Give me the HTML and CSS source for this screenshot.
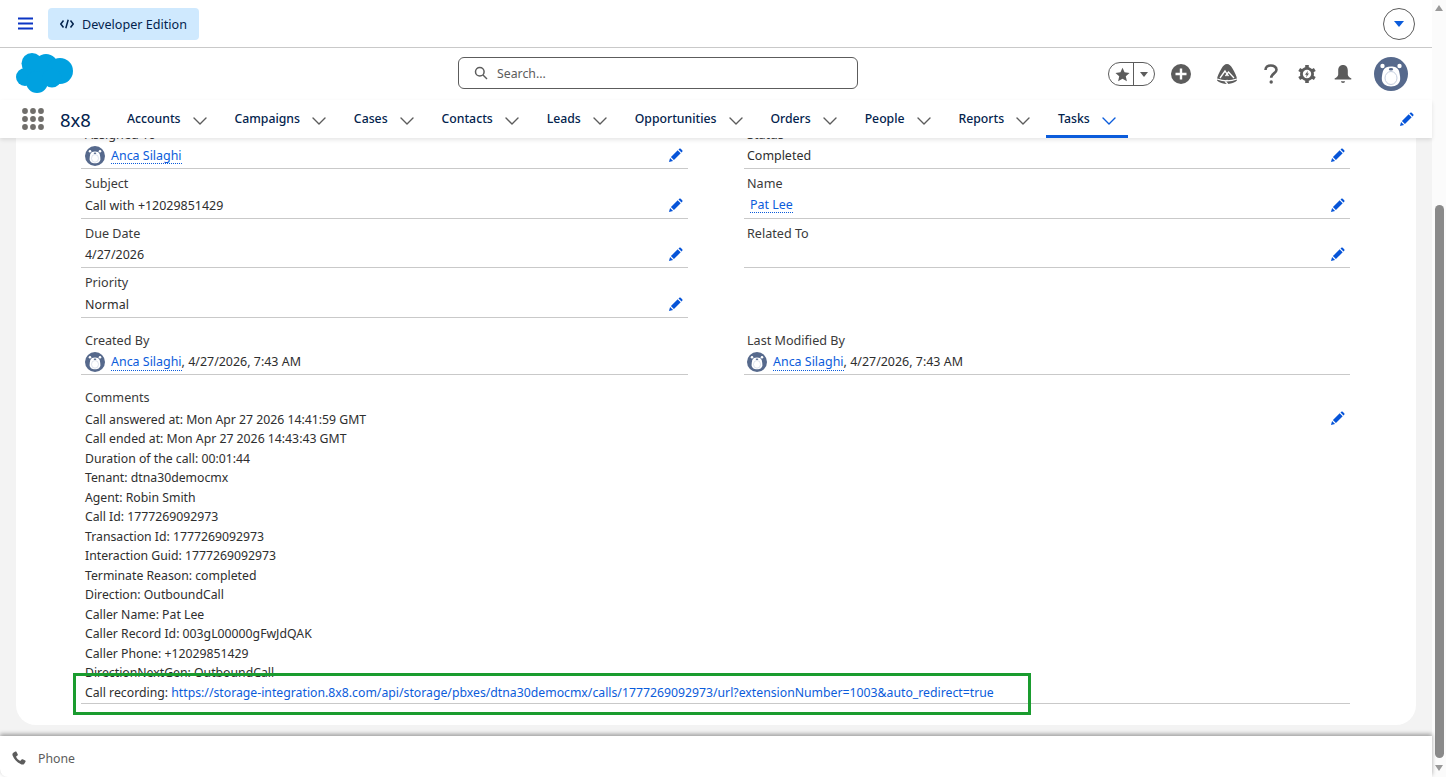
FILE: index.html
```html
<!DOCTYPE html>
<html lang="en">
<head>
    <meta charset="UTF-8">
    <title>Task | Salesforce</title>
    <link rel="stylesheet" href="styles.css">
</head>
<body>
    <svg class="defs" width="0" height="0">
        <symbol id="pencil" viewBox="0 0 16 16">
            <path d="M1 15l1.200-4.400 3.200 3.200z"/>
            <path d="M3.100 9.700l7.200-7.200 3.200 3.200-7.200 7.200z"/>
            <path d="M11.200 1.600l.9-.8c.4-.4 1-.4 1.400 0l1.700 1.700c.4.4.4 1 0 1.400l-.8.9z"/>
        </symbol>
        <symbol id="bear" viewBox="0 0 34 34">
            <circle cx="17" cy="17" r="17" fill="#56698c"/>
            <circle cx="8.500" cy="9" r="2.200" fill="#fff"/>
            <circle cx="25.500" cy="9" r="2.200" fill="#fff"/>
            <path d="M17 9.500c4 0 7 1.300 8 4.500.8 3 1.200 5.500 1.200 8 0 4.500-4 7.500-9.200 7.500S7.800 26.500 7.800 22c0-2.500.4-5 1.200-8 1-3.200 4-4.500 8-4.500z" fill="#fff"/>
            <ellipse cx="17" cy="21" rx="6" ry="6.500" fill="none" stroke="#c5cede" stroke-width="1"/>
            <ellipse cx="17" cy="12.300" rx="2.200" ry="1.200" fill="#56698c"/>
        </symbol>
        <symbol id="chevron" viewBox="0 0 14 8">
            <path d="M1 1l6 6 6-6" fill="none" stroke="currentColor" stroke-width="1.400" stroke-linecap="round" stroke-linejoin="round"/>
        </symbol>
    </svg>

    <div class="app">
        <div class="topbar">
            <svg class="hamburger" viewBox="0 0 15 13"><path d="M0 1.500h15M0 6.500h15M0 11.500h15"/></svg>
            <div class="edition">
                <svg class="code-icon" viewBox="0 0 14 10"><path d="M3.500 1.500L.8 5l2.700 3.500M10.500 1.500L13.200 5l-2.700 3.500M8.200 .8L5.800 9.200"/></svg>
                <span>Developer Edition</span>
            </div>
            <button class="setup-menu"><span class="caret"></span></button>
        </div>

        <header class="header">
            <svg class="cloud" viewBox="0 0 57 40">
                <circle cx="16" cy="10.500" r="10.500"/>
                <circle cx="30" cy="13" r="12"/>
                <circle cx="44" cy="18" r="13"/>
                <circle cx="9" cy="24" r="9"/>
                <circle cx="21" cy="29" r="11"/>
                <circle cx="36" cy="25" r="9.500"/>
            </svg>
            <div class="search">
                <svg class="search-icon" viewBox="0 0 14 14"><circle cx="5.800" cy="5.800" r="4.300"/><path d="M9 9l4 4"/></svg>
                <span>Search...</span>
            </div>
            <div class="utility">
                <div class="favorites">
                    <span class="fav-star">
                        <svg viewBox="0 0 16 16"><path d="M8 .8l2.200 4.900 5.300.6-4 3.500 1.200 5.300L8 12.400l-4.700 2.700 1.200-5.300-4-3.500 5.300-.6z"/></svg>
                    </span>
                    <span class="fav-menu"><span class="caret grey"></span></span>
                </div>
                <svg class="u-plus" viewBox="0 0 20 20"><circle cx="10" cy="10" r="10"/><path d="M10 4.500v11M4.500 10h11" stroke="#fff" stroke-width="2.400" fill="none"/></svg>
                <svg class="u-trail" viewBox="0 0 22 20">
                    <path d="M11 0c2.200 0 3.800 1.500 5.500 4.500 2 3.500 4.500 8 4.500 11 0 1-.4 1.500-1.200 2C17.500 18.800 14.500 20 11 20s-6.500-1.200-8.800-2.500c-.8-.5-1.200-1-1.200-2 0-3 2.500-7.500 4.500-11C7.200 1.500 8.800 0 11 0z"/>
                    <path d="M4 14l5-7 2 3 1.500-2 5.500 6M1 15c6 2.200 14 2.200 20 0M11.500 16l-2 1.800 2.200 2.200M9.500 12l1.500-2 1.500 2" fill="none" stroke="#fff" stroke-width="1.300"/>
                </svg>
                <svg class="u-help" viewBox="0 0 16 20"><path d="M2.500 6c0-3 2.300-4.500 5.300-4.500S13.500 3 13.500 5.700c0 3.600-5.300 3.800-5.300 8" fill="none" stroke="#5c5c5c" stroke-width="2.600"/><circle cx="8.200" cy="18" r="1.700"/></svg>
                <svg class="u-gear" viewBox="0 0 20 20">
                    <g class="gear-teeth">
                        <path d="M10 1v18"/>
                        <path d="M2.200 5.500l15.600 9"/>
                        <path d="M2.200 14.500l15.600-9"/>
                    </g>
                    <circle cx="10" cy="10" r="7"/>
                    <circle cx="10" cy="10" r="4.200" fill="#fff"/>
                    <path d="M11 6.800L8 10.800h1.700l-.7 2.600 3-4h-1.700z"/>
                </svg>
                <svg class="u-bell" viewBox="0 0 20 20"><path d="M10 1c3 0 4.800 2.200 4.800 5.500v4c0 1.500 1.200 2.800 3.200 3.700.7.400.5 1.300-.4 1.300H2.400c-.9 0-1.100-.9-.4-1.300 2-.9 3.200-2.200 3.200-3.700v-4C5.200 3.200 7 1 10 1z"/><path d="M8 17.300h4c0 .9-.8 1.700-2 1.700s-2-.8-2-1.700z"/></svg>
                <svg class="u-avatar"><use href="#bear"/></svg>
            </div>
        </header>

        <nav class="nav">
            <svg class="waffle" viewBox="0 0 22 22">
                <circle cx="3" cy="3" r="2.900"/><circle cx="11" cy="3" r="2.900"/><circle cx="19" cy="3" r="2.900"/>
                <circle cx="3" cy="11" r="2.900"/><circle cx="11" cy="11" r="2.900"/><circle cx="19" cy="11" r="2.900"/>
                <circle cx="3" cy="19" r="2.900"/><circle cx="11" cy="19" r="2.900"/><circle cx="19" cy="19" r="2.900"/>
            </svg>
            <span class="app-name">8x8</span>
            <a class="tab">Accounts<svg class="tab-chev"><use href="#chevron"/></svg></a>
            <a class="tab">Campaigns<svg class="tab-chev"><use href="#chevron"/></svg></a>
            <a class="tab">Cases<svg class="tab-chev"><use href="#chevron"/></svg></a>
            <a class="tab">Contacts<svg class="tab-chev"><use href="#chevron"/></svg></a>
            <a class="tab">Leads<svg class="tab-chev"><use href="#chevron"/></svg></a>
            <a class="tab">Opportunities<svg class="tab-chev"><use href="#chevron"/></svg></a>
            <a class="tab">Orders<svg class="tab-chev"><use href="#chevron"/></svg></a>
            <a class="tab">People<svg class="tab-chev"><use href="#chevron"/></svg></a>
            <a class="tab">Reports<svg class="tab-chev"><use href="#chevron"/></svg></a>
            <a class="tab active">Tasks<svg class="tab-chev"><use href="#chevron"/></svg></a>
            <svg class="pencil nav-pencil"><use href="#pencil"/></svg>
        </nav>

        <main class="main">
            <section class="card">
                <div class="grid">
                    <div class="field">
                        <div class="label">Assigned To</div>
                        <div class="value"><span class="who"><svg class="mini-avatar"><use href="#bear"/></svg><a class="link">Anca Silaghi</a></span><svg class="pencil"><use href="#pencil"/></svg></div>
                    </div>
                    <div class="field">
                        <div class="label">Status</div>
                        <div class="value"><span>Completed</span><svg class="pencil"><use href="#pencil"/></svg></div>
                    </div>
                    <div class="field">
                        <div class="label">Subject</div>
                        <div class="value"><span>Call with +12029851429</span><svg class="pencil"><use href="#pencil"/></svg></div>
                    </div>
                    <div class="field">
                        <div class="label">Name</div>
                        <div class="value"><a class="link pad">Pat Lee</a><svg class="pencil"><use href="#pencil"/></svg></div>
                    </div>
                    <div class="field">
                        <div class="label">Due Date</div>
                        <div class="value"><span>4/27/2026</span><svg class="pencil"><use href="#pencil"/></svg></div>
                    </div>
                    <div class="field">
                        <div class="label">Related To</div>
                        <div class="value"><span></span><svg class="pencil"><use href="#pencil"/></svg></div>
                    </div>
                    <div class="field">
                        <div class="label">Priority</div>
                        <div class="value"><span>Normal</span><svg class="pencil"><use href="#pencil"/></svg></div>
                    </div>
                    <div class="field blank"></div>
                    <div class="field spaced">
                        <div class="label">Created By</div>
                        <div class="value"><span class="who"><svg class="mini-avatar"><use href="#bear"/></svg><span><a class="link">Anca Silaghi</a>, 4/27/2026, 7:43 AM</span></span></div>
                    </div>
                    <div class="field spaced">
                        <div class="label">Last Modified By</div>
                        <div class="value"><span class="who"><svg class="mini-avatar"><use href="#bear"/></svg><span><a class="link">Anca Silaghi</a>, 4/27/2026, 7:43 AM</span></span></div>
                    </div>
                </div>

                <div class="comments">
                    <div class="label">Comments</div>
                    <div class="comment-body">
                        <div class="lines">
                            <div>Call answered at: Mon Apr 27 2026 14:41:59 GMT</div>
                            <div>Call ended at: Mon Apr 27 2026 14:43:43 GMT</div>
                            <div>Duration of the call: 00:01:44</div>
                            <div>Tenant: dtna30democmx</div>
                            <div>Agent: Robin Smith</div>
                            <div>Call Id: 1777269092973</div>
                            <div>Transaction Id: 1777269092973</div>
                            <div>Interaction Guid: 1777269092973</div>
                            <div>Terminate Reason: completed</div>
                            <div>Direction: OutboundCall</div>
                            <div>Caller Name: Pat Lee</div>
                            <div>Caller Record Id: 003gL00000gFwJdQAK</div>
                            <div>Caller Phone: +12029851429</div>
                            <div>DirectionNextGen: OutboundCall</div>
                            <div>Call recording: <a class="url">https://storage-integration.8x8.com/api/storage/pbxes/dtna30democmx/calls/1777269092973/url?extensionNumber=1003&amp;auto_redirect=true</a></div>
                        </div>
                        <svg class="pencil comment-pencil"><use href="#pencil"/></svg>
                    </div>
                    <div class="highlight"></div>
                </div>
            </section>
        </main>

        <footer class="dock">
            <svg class="phone" viewBox="0 0 14 14"><path d="M3.300.5L1.300 1.700C.4 2.300.2 3.400.6 4.500c1.700 4.200 4.700 7.200 8.900 8.900 1.100.4 2.200.2 2.800-.7l1.200-2c.2-.4.100-.8-.3-1.100L10.700 8.300c-.4-.2-.8-.2-1.100.2l-.9 1.100c-.2.300-.5.300-.8.200C6.300 9 5 7.700 4.200 6.100c-.1-.3-.1-.6.2-.8l1.100-.9c.4-.3.400-.7.200-1.100L4.400.8C4.100.4 3.700.3 3.300.5z"/></svg>
            <span>Phone</span>
        </footer>
    </div>

    <div class="scrollbar">
        <span class="sb-up"></span>
        <span class="sb-thumb"></span>
        <span class="sb-down"></span>
    </div>
</body>
</html>
```

FILE: styles.css
```css
* {
    box-sizing: border-box;
}
body {
    margin: 0;
    height: 777px;
    overflow: hidden;
    display: flex;
    background: #fff;
    font-family: "Noto Sans", "Open Sans", sans-serif;
    font-size: 12.3px;
    color: #2e2e2e;
}
.defs {
    position: absolute;
}
.app {
    width: 1432px;
    height: 777px;
    display: flex;
    flex-direction: column;
}

/* top bar */
.topbar {
    height: 48px;
    flex: none;
    display: flex;
    align-items: center;
    padding: 0 17px 0 18px;
    border-bottom: 1px solid #c9c9c9;
}
.hamburger {
    width: 15px;
    height: 13px;
    fill: none;
    stroke: #0b35c4;
    stroke-width: 1.900;
}
.edition {
    margin-left: 15px;
    width: 151px;
    height: 32px;
    display: flex;
    align-items: center;
    padding: 1px 0 0 12px;
    gap: 8px;
    background: #cfe9fe;
    border-radius: 4px;
    color: #03234d;
    font-size: 12.600px;
}
.code-icon {
    width: 14px;
    height: 10px;
    fill: none;
    stroke: #03234d;
    stroke-width: 1.500;
}
.setup-menu {
    margin-left: auto;
    width: 32px;
    height: 32px;
    padding: 0;
    background: #fff;
    border: 1px solid #5c5c5c;
    border-radius: 50%;
    display: flex;
    align-items: center;
    justify-content: center;
}
.caret {
    width: 0;
    height: 0;
    border-left: 5px solid transparent;
    border-right: 5px solid transparent;
    border-top: 6px solid #0b5cdb;
}
.caret.grey {
    border-left-width: 4.500px;
    border-right-width: 4.500px;
    border-top: 5px solid #5c5c5c;
}

/* global header */
.header {
    height: 52px;
    flex: none;
    display: flex;
    align-items: center;
    padding: 0 24px 0 16px;
}
.cloud {
    width: 57px;
    height: 40px;
    fill: #00a1e0;
    margin-top: -2px;
}
.search {
    margin-left: 385px;
    margin-top: -3px;
    width: 400px;
    height: 32px;
    display: flex;
    align-items: center;
    gap: 9px;
    padding: 1px 0 0 15px;
    border: 1px solid #5c5c5c;
    border-radius: 6px;
    color: #5c5c5c;
}
.search-icon {
    width: 14px;
    height: 14px;
    fill: none;
    stroke: #5c5c5c;
    stroke-width: 1.500;
}
.utility {
    margin-left: auto;
    display: flex;
    align-items: center;
    fill: #5c5c5c;
}
.favorites {
    width: 47px;
    height: 24px;
    display: flex;
    border: 1px solid #5c5c5c;
    border-radius: 12px;
}
.fav-star {
    width: 25px;
    display: flex;
    align-items: center;
    justify-content: center;
    padding-left: 2px;
    border-right: 1px solid #5c5c5c;
}
.fav-star svg {
    width: 15px;
    height: 15px;
}
.fav-menu {
    flex: 1;
    display: flex;
    align-items: center;
    justify-content: center;
}
.u-plus {
    width: 20px;
    height: 20px;
    margin-left: 16px;
}
.u-trail {
    width: 22px;
    height: 20px;
    margin-left: 25px;
}
.u-help {
    width: 16px;
    height: 20px;
    margin-left: 25px;
}
.u-gear {
    width: 20px;
    height: 20px;
    margin-left: 18px;
}
.gear-teeth {
    fill: none;
    stroke: #5c5c5c;
    stroke-width: 3.600;
}
.u-bell {
    width: 20px;
    height: 20px;
    margin-left: 16px;
}
.u-avatar {
    width: 34px;
    height: 34px;
    margin-left: 21px;
}

/* app nav */
.nav {
    height: 38px;
    flex: none;
    display: flex;
    align-items: stretch;
    padding-left: 22px;
    background: #fff;
    box-shadow: 0 2px 4px rgba(0, 0, 0, 0.1);
    position: relative;
    z-index: 2;
}
.waffle {
    width: 22px;
    height: 22px;
    margin-top: 8px;
    fill: #706e6b;
}
.app-name {
    margin-left: 16px;
    width: 55px;
    font-size: 18.500px;
    line-height: 40px;
    color: #03234d;
}
.tab {
    display: flex;
    align-items: center;
    padding: 1px 12px 0;
    margin-right: 3.900px;
    font-size: 12.250px;
    font-weight: 500;
    color: #03234d;
    border-bottom: 3px solid transparent;
    white-space: nowrap;
}
.tab-chev {
    width: 14px;
    height: 8px;
    margin-left: 12px;
    margin-top: 5px;
    color: #5c5c5c;
}
.tab.active {
    border-bottom-color: #0b5cdb;
}
.tab.active .tab-chev {
    color: #0b5cdb;
}
.pencil {
    width: 15px;
    height: 15px;
    flex: none;
    fill: #0654d8;
}
.nav-pencil {
    margin: 12px 18px 0 auto;
}

/* record page */
.main {
    flex: 1;
    min-height: 0;
    overflow: hidden;
    background: #f3f3f3;
    padding: 0 16px;
}
.card {
    margin-top: -18.500px;
    height: 605.500px;
    background: #fff;
    border-radius: 0 0 20px 20px;
    padding: 0 66px 0 65px;
}
.grid {
    display: grid;
    grid-template-columns: 607px 606px;
    column-gap: 56px;
}
.field {
    height: 49.500px;
    padding: 4px 4px 0;
    border-bottom: 1px solid #c9c9c9;
}
.field:nth-child(even) {
    padding-left: 3px;
}
.field.blank {
    border-bottom: 0;
}
.field.spaced {
    height: 57.500px;
    padding-top: 12px;
}
.label {
    height: 21px;
    line-height: 21px;
    font-size: 12.600px;
    color: #3a3a3a;
}
.value {
    height: 22px;
    display: flex;
    align-items: center;
    justify-content: space-between;
    padding-right: 1px;
    font-size: 12.450px;
}
.who {
    display: flex;
    align-items: center;
    gap: 6px;
}
.mini-avatar {
    width: 20px;
    height: 20px;
}
.link {
    color: #0b5cdb;
    border-bottom: 1px dotted #0b5cdb;
    line-height: 15px;
}
.link.pad {
    margin-left: 3px;
}
.comments {
    position: relative;
    padding: 11.500px 4px 0;
    border-bottom: 1px solid #c9c9c9;
}
.comment-body {
    display: flex;
    justify-content: space-between;
    margin-top: 2px;
    padding-right: 1px;
}
.lines {
    font-size: 12.260px;
    line-height: 19.500px;
    white-space: nowrap;
    padding-bottom: .5px;
}
.comment-pencil {
    margin-top: 1.500px;
}
.url {
    color: #0b5cdb;
}
.highlight {
    position: absolute;
    left: -8px;
    bottom: -12px;
    width: 958px;
    height: 42px;
    border: 3px solid #1a9c2f;
}

/* bottom dock */
.dock {
    height: 41px;
    flex: none;
    display: flex;
    align-items: center;
    gap: 12px;
    padding: 3px 0 0 12px;
    background: #fff;
    border-bottom-left-radius: 8px;
    box-shadow: 0 -2px 4px rgba(0, 0, 0, 0.35);
    position: relative;
    color: #5c5c5c;
}
.phone {
    width: 14px;
    height: 14px;
    fill: #5c5c5c;
}

/* window scrollbar */
.scrollbar {
    width: 14px;
    display: flex;
    flex-direction: column;
    align-items: center;
    background: #fbfbfb;
}
.sb-up,
.sb-down {
    width: 0;
    height: 0;
    border-left: 4.500px solid transparent;
    border-right: 4.500px solid transparent;
}
.sb-up {
    margin-top: 5px;
    border-bottom: 6px solid #999;
}
.sb-thumb {
    width: 9px;
    height: 553px;
    margin-top: 194px;
    border-radius: 4.500px;
    background: #8a8a8a;
}
.sb-down {
    margin-top: 7px;
    border-top: 6px solid #999;
}
```
